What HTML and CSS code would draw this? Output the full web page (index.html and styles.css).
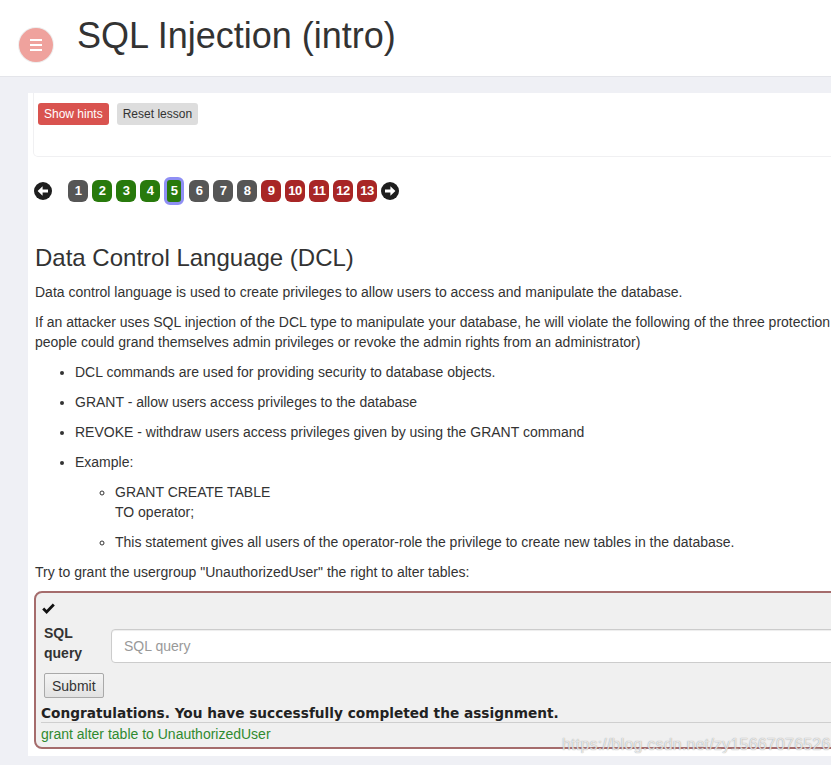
FILE: index.html
```html
<!DOCTYPE html>
<html>
<head>
<meta charset="utf-8">
<link rel="stylesheet" href="styles.css">
</head>
<body>
<header class="topbar">
  <button class="menu-btn" aria-label="menu"><span></span><span></span><span></span></button>
  <h1 class="title">SQL Injection (intro)</h1>
</header>
<main class="main">
  <div class="panel">
    <div class="toolcard">
      <button class="btn btn-hints">Show hints</button>
      <button class="btn btn-reset">Reset lesson</button>
    </div>
    <nav class="pager">
      <svg class="arrow arrow-left" width="18" height="18" viewBox="0 0 18 18"><circle cx="9" cy="9" r="9" fill="#1e1e1e"/><path d="M3.6 9 L8.6 4.3 L8.6 7.4 L14 7.4 L14 10.6 L8.6 10.6 L8.6 13.7 Z" fill="#fff"/></svg>
      <span class="pg gray">1</span>
      <span class="pg green">2</span>
      <span class="pg green">3</span>
      <span class="pg green">4</span>
      <span class="pg green current">5</span>
      <span class="pg gray">6</span>
      <span class="pg gray">7</span>
      <span class="pg gray">8</span>
      <span class="pg red">9</span>
      <span class="pg red">10</span>
      <span class="pg red">11</span>
      <span class="pg red">12</span>
      <span class="pg red">13</span>
      <svg class="arrow arrow-right" width="18" height="18" viewBox="0 0 18 18"><circle cx="9" cy="9" r="9" fill="#1e1e1e"/><path d="M14.4 9 L9.4 4.3 L9.4 7.4 L4 7.4 L4 10.6 L9.4 10.6 L9.4 13.7 Z" fill="#fff"/></svg>
    </nav>
    <div class="content">
      <h2 class="heading">Data Control Language (DCL)</h2>
      <p>Data control language is used to create privileges to allow users to access and manipulate the database.</p>
      <p>If an attacker uses SQL injection of the DCL type to manipulate your database, he will violate the following of the three protection goals of the CIA triad: Integrity (unauthorized<br>people could grand themselves admin privileges or revoke the admin rights from an administrator)</p>
      <ul class="list">
        <li>DCL commands are used for providing security to database objects.</li>
        <li>GRANT - allow users access privileges to the database</li>
        <li>REVOKE - withdraw users access privileges given by using the GRANT command</li>
        <li>Example:
          <ul class="sublist">
            <li>GRANT CREATE TABLE<br>TO operator;</li>
            <li>This statement gives all users of the operator-role the privilege to create new tables in the database.</li>
          </ul>
        </li>
      </ul>
      <p class="task">Try to grant the usergroup "UnauthorizedUser" the right to alter tables:</p>
      <form class="attack">
        <div class="check"><svg width="13" height="11" viewBox="0 0 13 11"><path d="M1.2 5.6 L4.6 9 L11.8 1.6" fill="none" stroke="#111" stroke-width="2.8"/></svg></div>
        <div class="row">
          <label class="lbl">SQL query</label>
          <input class="query" type="text" placeholder="SQL query">
        </div>
        <button type="button" class="submit">Submit</button>
        <div class="feedback">Congratulations. You have successfully completed the assignment.</div>
        <div class="output">grant alter table to UnauthorizedUser</div>
      </form>
    </div>
  </div>
</main>
<div class="watermark">https://blog.csdn.net/zy15667076526</div>
</body>
</html>
```
FILE: styles.css
```css
html, body {
  margin: 0;
  padding: 0;
  overflow: hidden;
  height: 765px;
}
body {
  background: #eff0f5;
  font-family: "Liberation Sans", Arial, Helvetica, sans-serif;
  color: #333;
  font-size: 14px;
  line-height: 20px;
  position: relative;
}
.topbar {
  background: #fff;
  border-bottom: 1px solid #e4e5ea;
  display: flex;
  align-items: flex-start;
  box-sizing: border-box;
  height: 77px;
}
.menu-btn {
  margin: 28px 0 0 19px;
  width: 34px;
  height: 34px;
  border-radius: 50%;
  border: none;
  background: #efa29d;
  box-shadow: 0 0 0 1px rgba(0,0,0,0.07);
  display: flex;
  flex-direction: column;
  align-items: center;
  justify-content: center;
  gap: 2.5px;
  padding: 0;
}
.menu-btn span {
  display: block;
  width: 12px;
  height: 2.5px;
  background: #fff;
}
.title {
  margin: 18px 0 0 24px;
  font-size: 36px;
  line-height: 36px;
  font-weight: normal;
  color: #333;
  white-space: nowrap;
}
.main {
  padding: 16px 0 0 28px;
}
.panel {
  width: 1100px;
  background: #fff;
  padding: 0 0 7px 5px;
}
.toolcard {
  border: 1px solid #f0f0f2;
  border-top: none;
  border-radius: 0 0 5px 5px;
  padding: 10px 4px 31px 4px;
  display: flex;
  gap: 8px;
}
.btn {
  font-family: "Liberation Sans", Arial, sans-serif;
  font-size: 12px;
  line-height: 16px;
  height: 22px;
  padding: 3px 6px;
  border: none;
  border-radius: 3px;
}
.btn-hints {
  background: #d9534f;
  color: #fff;
}
.btn-reset {
  background: #dddddd;
  color: #333;
}
.pager {
  display: flex;
  align-items: center;
  margin-top: 20px;
  height: 28px;
  padding-left: 1px;
}
.arrow-left {
  margin-right: 16px;
}
.arrow-right {
  margin-left: 4px;
}
.pg {
  display: inline-flex;
  align-items: center;
  justify-content: center;
  width: 20px;
  height: 22px;
  border-radius: 6px;
  color: #fff;
  font-weight: bold;
  font-size: 13px;
  letter-spacing: -0.5px;
  margin-right: 4px;
  box-sizing: border-box;
}
.pg:last-of-type {
  margin-right: 0;
}
.gray { background: #565656; }
.green { background: #287a0c; }
.red { background: #a82626; }
.pg.current {
  width: 20px;
  height: 28px;
  border: 3px solid #8f8ff4;
  margin-right: 5px;
}
.content {
  padding-left: 2px;
}
.heading {
  margin: 40px 0 11px 0;
  font-size: 24px;
  line-height: 26px;
  font-weight: normal;
  color: #333;
}
p {
  margin: 0 0 10px 0;
}
.list {
  margin: 0;
  padding-left: 40px;
}
.list li {
  margin-bottom: 10px;
}
.sublist {
  margin: 10px 0 0 0;
  padding-left: 40px;
  list-style-type: circle;
}
.sublist li {
  margin-bottom: 10px;
}
.sublist li:last-child {
  margin-bottom: 0;
}
.task {
  margin: 1px 0 9px 0;
}
.attack {
  margin: 0 0 0 -1px;
  border: 2px solid #a56c6c;
  border-radius: 8px;
  background: #f0f0f0;
  padding: 3px 5px 4px 5px;
}
.check {
  height: 24px;
  display: flex;
  align-items: center;
  padding-left: 1px;
}
.row {
  display: flex;
  align-items: flex-start;
  padding: 3px 0;
}
.lbl {
  width: 67px;
  padding-left: 3px;
  font-weight: bold;
  line-height: 20px;
  flex: none;
}
.query {
  margin-top: 6px;
  width: 900px;
  height: 34px;
  box-sizing: border-box;
  border: 1px solid #ccc;
  border-radius: 4px;
  background: #fff;
  padding: 6px 12px;
  font-family: "Liberation Sans", Arial, sans-serif;
  font-size: 14px;
  color: #555;
  box-shadow: inset 0 1px 1px rgba(0,0,0,0.075);
}
.query::placeholder {
  color: #999;
}
.submit {
  display: block;
  margin: 7px 0 0 3px;
  height: 25px;
  padding: 0 7px;
  font-family: "Liberation Sans", Arial, sans-serif;
  font-size: 14px;
  color: #333;
  background: linear-gradient(#f4f4f4, #e2e2e2);
  border: 1px solid #a9a9a9;
  border-radius: 2px;
}
.feedback {
  margin-top: 6px;
  font-family: "DejaVu Sans", Verdana, sans-serif;
  font-weight: bold;
  font-size: 13.7px;
  line-height: 18px;
  color: #222;
  border-bottom: 1px solid #cfcfcf;
  white-space: nowrap;
}
.output {
  margin-top: 2px;
  color: #2f8a2f;
  line-height: 18px;
}
.watermark {
  position: absolute;
  left: 562px;
  top: 735px;
  font-size: 16px;
  line-height: 20px;
  color: rgba(255,255,255,0.75);
  text-shadow: 0 0 1px rgba(110,110,110,0.8);
  white-space: nowrap;
  letter-spacing: 0.2px;
}
```
